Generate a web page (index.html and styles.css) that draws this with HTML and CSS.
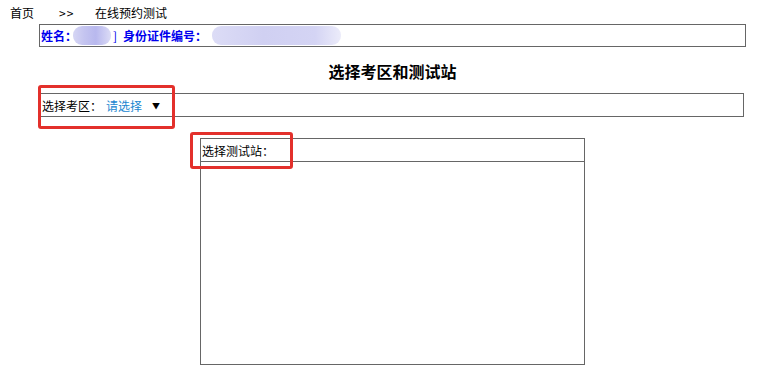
FILE: index.html
```html
<!DOCTYPE html>
<html lang="zh">
<head>
<meta charset="utf-8">
<link rel="stylesheet" href="styles.css">
</head>
<body>
<div class="page">
  <div class="crumbs">
    <span class="crumb-home">首页</span>
    <span class="crumb-sep">&gt;&gt;</span>
    <span class="crumb-cur">在线预约测试</span>
  </div>
  <div class="info">
    <span class="lbl">姓名：</span>
    <span class="blur blur-name"></span>
    <span class="brk">]</span>
    <span class="lbl">身份证件编号：</span>
    <span class="blur blur-id"></span>
  </div>
  <h1 class="title">选择考区和测试站</h1>
  <div class="area">
    <span>选择考区：</span>
    <span class="pick">请选择</span>
    <span class="caret">▼</span>
  </div>
  <div class="station">
    <div class="station-head">选择测试站：</div>
    <div class="station-body"></div>
  </div>
  <div class="mark mark-area"></div>
  <div class="mark mark-station"></div>
</div>
</body>
</html>
```

FILE: styles.css
```css
html, body {
  margin: 0;
  padding: 0;
  background: #fff;
}
body {
  font-family: "Noto Sans CJK SC", "DejaVu Sans", sans-serif;
  font-size: 12px;
  color: #000;
}
.page {
  position: relative;
  width: 764px;
  height: 383px;
}
.crumbs {
  height: 24px;
  display: flex;
  align-items: center;
  padding-left: 10px;
  padding-top: 1px;
  box-sizing: border-box;
  line-height: 14px;
}
.crumb-home { width: 49px; }
.crumb-sep { width: 36px; letter-spacing: 1px; }
.info {
  margin-left: 39px;
  width: 707px;
  height: 23px;
  box-sizing: border-box;
  border: 1px solid #666;
  display: flex;
  align-items: center;
  padding-left: 1px;
  color: #0000ee;
  font-weight: bold;
}
.blur {
  display: inline-block;
  height: 19px;
  border-radius: 9px;
  background: linear-gradient(90deg, #d6d6f4 0%, #c4c4f0 30%, #b8b8ee 60%, #dcdcf6 100%);
}
.blur-name { width: 38px; margin-left: -4px; }
.brk { font-weight: normal; width: 10px; margin-left: 2px; }
.blur-id { width: 129px; margin-left: 5px; background: linear-gradient(90deg, #dcdcf6 0%, #d0d0f2 40%, #d4d4f4 80%, #ececfa 100%); }
.title {
  margin: 0;
  height: 46px;
  display: flex;
  align-items: center;
  justify-content: center;
  margin-left: 39px;
  width: 707px;
  font-size: 16px;
  font-weight: bold;
  padding-top: 1px;
  box-sizing: border-box;
}
.area {
  margin-left: 39px;
  width: 705px;
  height: 24px;
  box-sizing: border-box;
  border: 1px solid #666;
  display: flex;
  align-items: center;
  padding-left: 2px;
}
.pick { color: #1a86d0; margin-left: 4px; }
.caret { font-size: 8px; margin-left: 10px; }
.station {
  margin-top: 21px;
  margin-left: 200px;
  width: 385px;
  height: 227px;
  box-sizing: border-box;
  border: 1px solid #666;
  display: flex;
  flex-direction: column;
}
.station-head {
  height: 22px;
  border-bottom: 1px solid #666;
  display: flex;
  align-items: center;
  padding-left: 1px;
}
.station-body { flex: 1; }
.mark {
  position: absolute;
  border: 3px solid #e3302b;
  border-radius: 3px;
  box-sizing: border-box;
}
.mark-area { left: 38px; top: 85px; width: 137px; height: 44px; }
.mark-station { left: 190px; top: 132px; width: 103px; height: 37px; }
```
